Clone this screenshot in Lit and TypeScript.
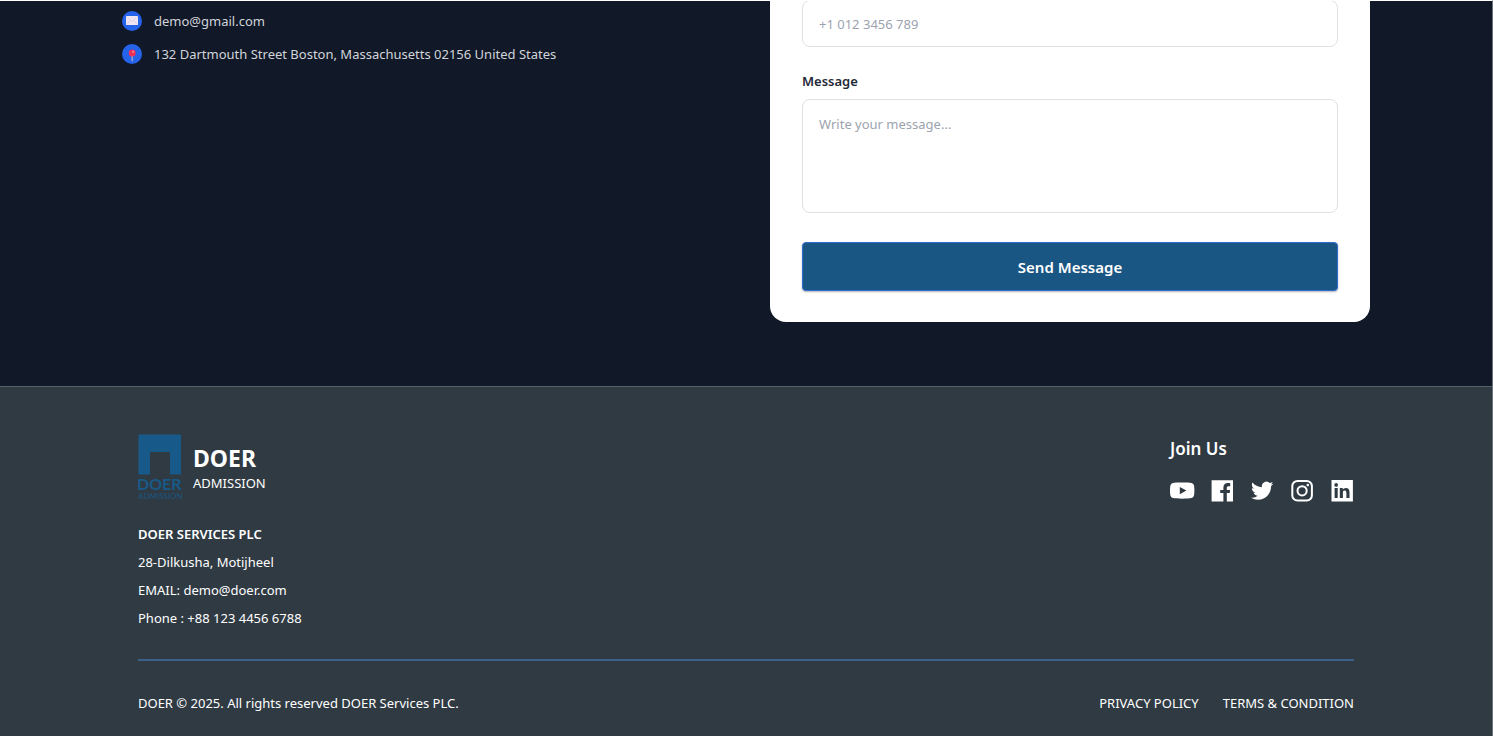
import { LitElement, html, css, svg } from "lit";
import { customElement } from "lit/decorators.js";

const mailIcon = html`<svg class="badge" viewBox="0 0 20 20" aria-hidden="true">
  <circle cx="10" cy="10" r="10" fill="#2563eb" />
  <rect x="4" y="5" width="12" height="9" rx=".6" fill="#efe6f3" />
  <path d="M4.3 5.5l5.7 5 5.7-5M4.3 13.6l4.2-4.2M15.7 13.6l-4.2-4.2" fill="none" stroke="#cdbdd8" stroke-width=".5" />
</svg>`;

const pinIcon = html`<svg class="badge" viewBox="0 0 20 20" aria-hidden="true">
  <circle cx="10" cy="10" r="10" fill="#2563eb" />
  <path d="M9.600 11h1.100v5.800l-.5.900-.6-.9z" fill="#b9b4c9" />
  <circle cx="10.200" cy="9" r="3.500" fill="#f0305a" />
  <circle cx="11.200" cy="7.800" r="1" fill="#ff8a9c" />
</svg>`;

const socials = [
  {
    name: "YouTube",
    shape: svg`<path fill-rule="evenodd" d="M12.2 3.500c4 0 7.700.1 9.300.6 1.500.4 2.300 1.400 2.600 3 .4 2.800.4 6.200 0 9-.3 1.600-1.100 2.600-2.600 3-3.600.7-15 .7-18.600 0C1.400 18.700.6 17.700.3 16.100c-.4-2.800-.4-6.200 0-9 .3-1.600 1.100-2.600 2.600-3C4.500 3.600 8.200 3.500 12.200 3.500zM9.800 8v7.200l6.600-3.600z"/>`,
  },
  {
    name: "Facebook",
    shape: svg`<path d="M1.600 1.200H23v21.300h-6.200V14h2.900l.4-3.100h-3.300V9c0-1 .4-1.700 1.700-1.700h1.700V4.200c-.6-.1-1.500-.2-2.400-.2-2.700 0-4.400 1.600-4.400 4.400v2.500H10.200V14h3.200v8.500H1.600z"/>`,
    cut: true,
  },
  {
    name: "Twitter",
    shape: svg`<path transform="translate(1 .5) scale(.93)" d="M23.950 4.570a10 10 0 0 1-2.820.77 4.960 4.960 0 0 0 2.160-2.720c-.95.550-2.010.950-3.130 1.180a4.920 4.920 0 0 0-8.380 4.480C7.690 8.090 4.070 6.130 1.640 3.160a4.820 4.820 0 0 0-.67 2.480c0 1.710.87 3.210 2.190 4.100a4.900 4.900 0 0 1-2.230-.62v.06a4.920 4.920 0 0 0 3.950 4.830 5 5 0 0 1-2.210.08 4.940 4.940 0 0 0 4.600 3.420A9.870 9.870 0 0 1 0 19.540a13.990 13.990 0 0 0 7.550 2.210c9.050 0 14-7.500 14-13.980 0-.21 0-.42-.02-.63a9.940 9.940 0 0 0 2.460-2.550z"/>`,
  },
  {
    name: "Instagram",
    shape: svg`<g fill="none" stroke="currentColor" stroke-width="2"><rect x="2.300" y="2" width="19.600" height="19.600" rx="5.200"/><circle cx="12.100" cy="11.800" r="4.600"/></g><circle cx="17.800" cy="6.100" r="1.300"/>`,
  },
  {
    name: "LinkedIn",
    shape: svg`<path fill-rule="evenodd" d="M1.500 1h21.400v21.400H1.500zM4.600 9.100v9.900h3.100V9.100zM6.150 4.100a1.850 1.850 0 1 0 0 3.700 1.850 1.850 0 0 0 0-3.700zM9.800 9.100v9.900h3.100v-5.200c0-1.400.5-2.300 1.800-2.300s1.700 1 1.700 2.400v5.100h3.100v-5.700c0-2.900-1.300-4.400-3.500-4.400-1.600 0-2.600.8-3.200 1.700V9.100z"/>`,
  },
];

@customElement("contact-section")
class ContactSection extends LitElement {
  static styles = css`
    :host {
      display: block;
      overflow: hidden;
      background: #111827;
      color: #d1d5db;
      font-size: 13px;
    }
    .inner {
      display: grid;
      grid-template-columns: 1fr 1fr;
      gap: 48px;
      max-width: 1248px;
      margin: 0 auto;
      padding-bottom: 64px;
    }
    .details {
      display: flex;
      flex-direction: column;
      gap: 11px;
      margin: 0;
      padding: 9px 0 0;
      list-style: none;
    }
    .detail {
      display: flex;
      align-items: center;
      gap: 12px;
      line-height: 22px;
    }
    .badge {
      flex: none;
      width: 20px;
      height: 20px;
    }
    .card {
      box-sizing: border-box;
      margin-top: -1px;
      padding: 0 32px 31px;
      background: #fff;
      border-radius: 0 0 16px 16px;
    }
    .field {
      box-sizing: border-box;
      display: block;
      width: 100%;
      height: 47px;
      padding: 12px 16px;
      border: 1px solid #e0e1e6;
      border-radius: 8px;
      background: #fff;
      color: #1f2937;
      font: inherit;
      line-height: 24px;
    }
    .area {
      height: 114px;
      resize: none;
    }
    .field::placeholder {
      color: #9ca3af;
      opacity: 1;
    }
    .label {
      display: block;
      margin: 24px 0 8px;
      color: #1f2937;
      font-weight: 600;
      line-height: 20px;
    }
    .send {
      display: block;
      width: 100%;
      height: 49px;
      margin-top: 29px;
      border: 1px solid #2f6bd0;
      border-radius: 4px;
      background: #1a5683;
      box-shadow: 0 1px 2px rgba(0, 0, 0, 0.3);
      color: #fff;
      font: inherit;
      font-size: 15px;
      font-weight: 600;
      cursor: pointer;
    }
  `;

  render() {
    return html`<div class="inner">
      <ul class="details">
        <li class="detail">${mailIcon}<span>demo@gmail.com</span></li>
        <li class="detail">${pinIcon}<span>132 Dartmouth Street Boston, Massachusetts 02156 United States</span></li>
      </ul>
      <form class="card" @submit=${(e: Event) => e.preventDefault()}>
        <input class="field" type="tel" aria-label="Phone" placeholder="+1 012 3456 789" />
        <label class="label" for="message">Message</label>
        <textarea class="field area" id="message" placeholder="Write your message..."></textarea>
        <button class="send" type="submit">Send Message</button>
      </form>
    </div>`;
  }
}

@customElement("site-footer")
class SiteFooter extends LitElement {
  static styles = css`
    :host {
      display: block;
      border-top: 1px solid #566067;
      background: #303a43;
      color: #fff;
      font-size: 13px;
    }
    .inner {
      max-width: 1216px;
      margin: 0 auto;
      padding: 47px 32px 22px;
    }
    .top {
      display: flex;
      justify-content: space-between;
      padding-bottom: 27px;
      border-bottom: 2px solid #3c6088;
    }
    .brand {
      display: flex;
      align-items: center;
      gap: 11px;
      margin-bottom: 20px;
    }
    .logo {
      width: 44px;
      height: 66px;
    }
    .titles {
      padding-top: 4px;
    }
    .name {
      font-size: 23px;
      font-weight: 700;
      line-height: 28px;
    }
    .tag {
      line-height: 22px;
    }
    .address {
      font-style: normal;
      line-height: 28px;
    }
    .company {
      font-weight: 600;
    }
    .join {
      margin: 0 0 15px;
      font-size: 17px;
      font-weight: 600;
      line-height: 30px;
    }
    .socials {
      display: flex;
      gap: 16px;
    }
    .social {
      display: block;
      width: 24px;
      height: 24px;
      color: #fff;
    }
    .glyph {
      display: block;
      width: 24px;
      height: 24px;
      overflow: visible;
    }
    .bottom {
      display: flex;
      justify-content: space-between;
      padding-top: 32px;
      line-height: 20px;
    }
    .links {
      display: flex;
      gap: 24px;
    }
    .link {
      color: #fff;
      text-decoration: none;
    }
  `;

  render() {
    return html`<footer class="inner">
      <div class="top">
        <div>
          <div class="brand">
            <svg class="logo" viewBox="0 0 44 66" role="img" aria-label="Doer Admission">
              <path d="M.5.500H43V40.500H32V18H12v22.500H.5z" fill="#175a89" />
              <text x="-1" y="56" fill="#175a89" font-family="Lato, sans-serif" font-size="16" font-weight="700">DOER</text>
              <text x="0" y="65" fill="#1b5680" font-family="Lato, sans-serif" font-size="8">ADMISSION</text>
            </svg>
            <div class="titles">
              <div class="name">DOER</div>
              <div class="tag">ADMISSION</div>
            </div>
          </div>
          <address class="address">
            <div class="company">DOER SERVICES PLC</div>
            <div>28-Dilkusha, Motijheel</div>
            <div>EMAIL: demo@doer.com</div>
            <div>Phone : +88 123 4456 6788</div>
          </address>
        </div>
        <div>
          <h2 class="join">Join Us</h2>
          <nav class="socials" aria-label="Social media">
            ${socials.map(
              (s) => html`<a class="social" href="#" aria-label=${s.name}
                ><svg class="glyph" viewBox="0 0 24 24" fill="currentColor" aria-hidden="true">${s.shape}</svg></a
              >`
            )}
          </nav>
        </div>
      </div>
      <div class="bottom">
        <span>DOER © 2025. All rights reserved DOER Services PLC.</span>
        <nav class="links" aria-label="Legal">
          <a class="link" href="#">PRIVACY POLICY</a>
          <a class="link" href="#">TERMS &amp; CONDITION</a>
        </nav>
      </div>
    </footer>`;
  }
}

@customElement("app-root")
class AppRoot extends LitElement {
  static styles = css`
    :host {
      box-sizing: border-box;
      display: flex;
      flex-direction: column;
      min-height: 100vh;
      border-top: 1px solid #fff;
      border-right: 1px solid #6b7279;
      font-family: "Segoe UI", "Noto Sans", "Open Sans", sans-serif;
    }
    .footer {
      flex: 1;
    }
  `;

  render() {
    return html`<contact-section></contact-section><site-footer class="footer"></site-footer>`;
  }
}
